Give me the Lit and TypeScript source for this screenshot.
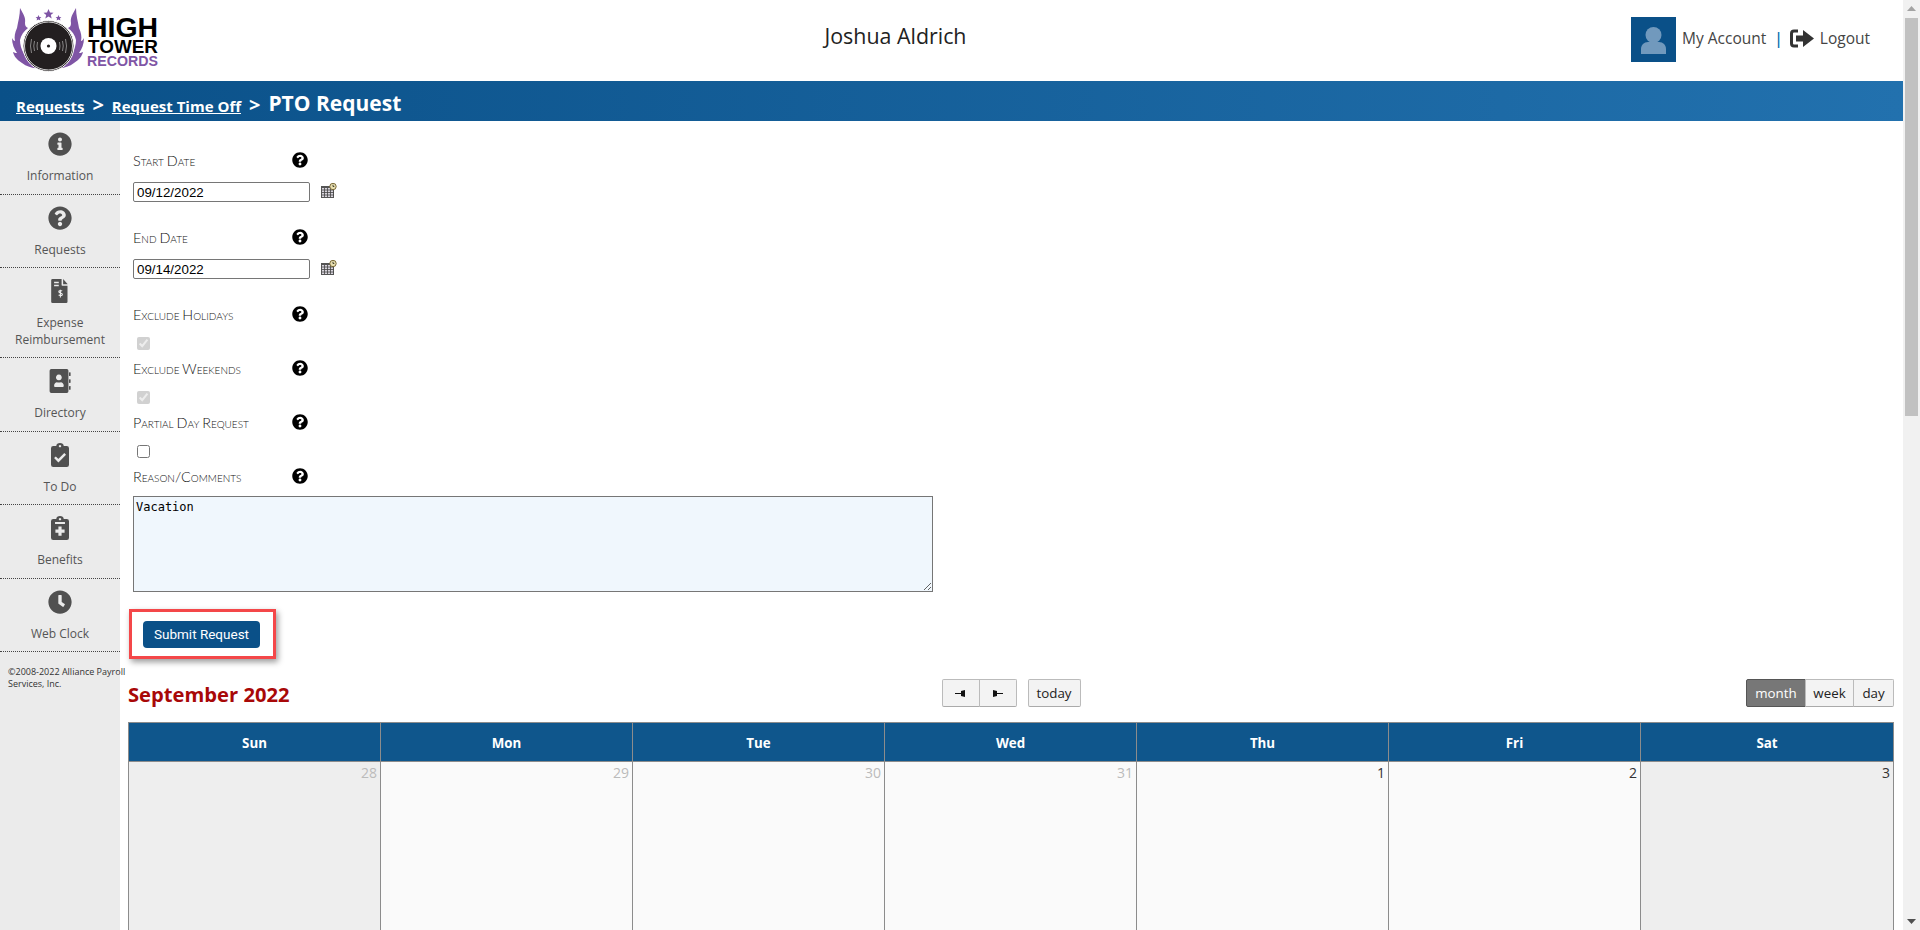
import { LitElement, html, css, svg } from "lit";
import { customElement } from "lit/decorators.js";

const INFO = "M256 8C119.043 8 8 119.083 8 256c0 136.997 111.043 248 248 248s248-111.003 248-248C504 119.083 392.957 8 256 8zm0 110c23.196 0 42 18.804 42 42s-18.804 42-42 42-42-18.804-42-42 18.804-42 42-42zm56 254c0 6.627-5.373 12-12 12h-88c-6.627 0-12-5.373-12-12v-24c0-6.627 5.373-12 12-12h12v-64h-12c-6.627 0-12-5.373-12-12v-24c0-6.627 5.373-12 12-12h64c6.627 0 12 5.373 12 12v100h12c6.627 0 12 5.373 12 12v24z";
const QUESTION = "M504 256c0 136.997-111.043 248-248 248S8 392.997 8 256C8 119.083 119.043 8 256 8s248 111.083 248 248zM262.655 90c-54.497 0-89.255 22.957-116.549 63.758-3.536 5.286-2.353 12.415 2.715 16.258l34.699 26.31c5.205 3.947 12.621 3.008 16.665-2.122 17.864-22.658 30.113-35.797 57.303-35.797 20.429 0 45.698 13.148 45.698 32.958 0 14.976-12.363 22.667-32.534 33.976C247.128 238.528 216 254.941 216 296v4c0 6.627 5.373 12 12 12h56c6.627 0 12-5.373 12-12v-1.333c0-28.462 83.186-29.647 83.186-106.667 0-58.002-60.165-102-116.531-102zM256 338c-25.365 0-46 20.635-46 46 0 25.364 20.635 46 46 46s46-20.636 46-46c0-25.365-20.635-46-46-46z";
const CLOCK = "M256 8C119 8 8 119 8 256s111 248 248 248 248-111 248-248S393 8 256 8zm57.1 350.1L224.9 294c-3.1-2.3-4.9-5.9-4.9-9.7V116c0-6.6 5.4-12 12-12h48c6.6 0 12 5.4 12 12v137.7l63.5 46.2c5.4 3.9 6.5 11.4 2.6 16.8l-28.2 38.8c-3.9 5.3-11.4 6.5-16.8 2.6z";

const icon = (d: string) => svg`<path d=${d} fill="currentColor"/>`;

const navIcons: Record<string, unknown> = {
  info: icon(INFO),
  question: icon(QUESTION),
  clock: icon(CLOCK),
  invoice: svg`<path fill="currentColor" fill-rule="evenodd" d="M96 0H290V130a14 14 0 0 0 14 14H416V484a28 28 0 0 1-28 28H96a28 28 0 0 1-28-28V28A28 28 0 0 1 96 0ZM130 60V92H230V60ZM130 124V156H230V124Z"/><path fill="currentColor" d="M322 0 416 104V112H322Z"/><path d="M300 258c-12-16-70-18-70 14 0 32 76 20 76 56 0 34-64 30-80 12M264 228V392" fill="none" stroke="#ebebeb" stroke-width="24"/>`,
  book: svg`<path fill="currentColor" fill-rule="evenodd" d="M70 0H400a36 36 0 0 1 36 36V476a36 36 0 0 1-36 36H70a36 36 0 0 1-36-36V36A36 36 0 0 1 70 0ZM232 118a62 62 0 1 0 .1 0ZM130 358c0-50 34-76 60-76 20 10 66 10 86 0 26 0 60 26 60 76 0 16-10 26-26 26H156c-16 0-26-10-26-26Z"/><rect fill="currentColor" x="448" y="70" width="34" height="80" rx="12"/><rect fill="currentColor" x="448" y="216" width="34" height="80" rx="12"/><rect fill="currentColor" x="448" y="362" width="34" height="80" rx="12"/>`,
  check: svg`<path fill="currentColor" fill-rule="evenodd" d="M112 64H176C176 28 212 0 256 0S336 28 336 64H400A48 48 0 0 1 448 112V464A48 48 0 0 1 400 512H112A48 48 0 0 1 64 464V112A48 48 0 0 1 112 64ZM256 40a26 26 0 1 0 .1 0Z"/><path d="M148 304 222 378 366 234" fill="none" stroke="#ebebeb" stroke-width="52"/>`,
  medical: svg`<path fill="currentColor" fill-rule="evenodd" d="M112 64H176C176 28 212 0 256 0S336 28 336 64H400A48 48 0 0 1 448 112V464A48 48 0 0 1 400 512H112A48 48 0 0 1 64 464V112A48 48 0 0 1 112 64ZM256 40a26 26 0 1 0 .1 0ZM150 128V168H362V128ZM222 226V290H158V358H222V422H290V358H354V290H290V226Z"/>`,
};

const nav = [
  { i: "info", t: ["Information"] },
  { i: "question", t: ["Requests"] },
  { i: "invoice", t: ["Expense", "Reimbursement"] },
  { i: "book", t: ["Directory"] },
  { i: "check", t: ["To Do"] },
  { i: "medical", t: ["Benefits"] },
  { i: "clock", t: ["Web Clock"] },
];

const days = [
  { n: 28, muted: true, weekend: true },
  { n: 29, muted: true },
  { n: 30, muted: true },
  { n: 31, muted: true },
  { n: 1 },
  { n: 2 },
  { n: 3, weekend: true },
];

@customElement("app-root")
export class AppRoot extends LitElement {
  static styles = css`
    :host { display: flex; height: 930px; overflow: hidden; font-family: "Open Sans", sans-serif; color: #333; background: #fff; }
    .page { flex: 1; min-width: 0; display: flex; flex-direction: column; }
    .header { height: 81px; flex: none; display: grid; grid-template-columns: 1fr auto 1fr; align-items: center; }
    .logo { display: block; margin-left: 11px; margin-top: -1px; }
    .logo text { font-family: "Liberation Sans", sans-serif; font-weight: 700; }
    .name { font-size: 21.4px; color: #222; margin-top: -11px; margin-left: -112px; }
    .account { justify-self: end; display: flex; align-items: center; margin-right: 33px; margin-top: -2px; font-size: 15.5px; color: #444; }
    .account span { margin-top: -3px; }
    .avatar { width: 45px; height: 45px; background: #0a5088; display: block; margin-right: 6px; }
    .account .sep { color: #0a6db0; margin-left: 8px; margin-right: 7px; font-weight: 600; }
    .logout { margin-right: 6px; display: block; margin-top: -2px; }
    .crumbs { height: 40px; flex: none; background: linear-gradient(90deg, #0a5088, #2271ae); color: #fff; display: flex; align-items: center; padding: 9px 16px 0; box-sizing: border-box; font-size: 15px; font-weight: 700; white-space: nowrap; }
    .crumbs a { color: #fff; text-decoration: underline; }
    .crumbs .gt { font-size: 20px; margin: -2px 8px 0; line-height: 1; }
    .crumbs .cur { font-size: 21px; margin-top: -5px; }
    .body { flex: 1; min-height: 0; display: flex; }
    .side { width: 120px; flex: none; background: #ebebeb; color: #555; }
    .item { padding: 11px 0 9px; border-bottom: 1px dotted #444; text-align: center; font-size: 12px; line-height: 16.5px; }
    .item svg { display: block; width: 24px; height: 24px; margin: 0 auto 12px; color: #505050; }
    .copy { padding: 14px 0 0 8px; font-size: 9px; line-height: 12px; color: #333; white-space: nowrap; }
    .main { flex: 1; min-width: 0; padding: 29px 9px 0 8px; }
    .form { padding-left: 5px; }
    .lab { display: flex; align-items: center; height: 20px; font-family: Lato, sans-serif; font-weight: 300; font-variant: small-caps; font-size: 14.4px; word-spacing: -1px; color: #111; }
    .lab span { width: 159px; white-space: nowrap; }
    .lab svg { width: 16px; height: 16px; display: block; color: #000; }
    .date { display: flex; align-items: center; margin-top: 12px; margin-bottom: 25px; }
    .date input { width: 177px; height: 20px; box-sizing: border-box; font: 13.33px "Liberation Sans", sans-serif; padding: 1px 3px; border: 1px solid #767676; border-radius: 2px; color: #000; margin: 0; }
    .date svg { margin-left: 11px; display: block; margin-top: -4px; }
    .cb { display: block; margin: 13px 0 8px 4px; width: 13px; height: 13px; }
    textarea { display: block; width: 800px; height: 96px; box-sizing: border-box; margin: 10px 0 0; border: 1px solid #767676; background: #f0f7fd; font: 12px "DejaVu Sans Mono", monospace; padding: 3px 2px 2px; color: #000; }
    .hl { margin: 17px 0 0 -4px; width: 147px; height: 50px; box-sizing: border-box; border: 3px solid #f44749; box-shadow: 2px 3px 6px rgba(0,0,0,.4); display: flex; align-items: center; padding: 0 0 0 11px; }
    .submit { width: 117px; height: 27px; background: #0a5088; color: #fff; border: 0; border-radius: 4px; font: 13.5px Roboto, sans-serif; padding: 0; margin: 0; }
    .toolbar { display: grid; grid-template-columns: 1fr auto 1fr; align-items: center; margin-top: 19px; height: 28px; }
    .title { font-size: 20.2px; font-weight: 700; color: #a80808; margin-top: 2px; white-space: nowrap; }
    .group { display: flex; }
    .navs { display: flex; gap: 11px; margin-left: 0; }
    .right { justify-self: end; }
    .btn { height: 28px; box-sizing: border-box; border: 1px solid #bbb; border-bottom-color: #aaa; background: #f3f3f3; font: 13.33px "Open Sans", sans-serif; color: #222; padding: 0; margin: 0 0 0 -1px; display: flex; align-items: center; justify-content: center; }
    .group .btn:first-child { margin-left: 0; border-radius: 2px 0 0 2px; }
    .group .btn:last-child { border-radius: 0 2px 2px 0; }
    .one { border-radius: 2px; }
    .w38 { width: 38px; }
    .w53 { width: 53px; margin: 0; }
    .w60 { width: 60px; }
    .w49 { width: 49px; }
    .w41 { width: 41px; }
    .on { background: #777; color: #fff; border-color: #555; }
    .cal { margin-top: 16px; display: grid; grid-template-columns: repeat(7, 1fr); border: solid #8c8c8c; border-width: 1px 1px 0 1px; box-sizing: border-box; height: 400px; grid-template-rows: 39px 1fr; }
    .th { background: #0f568c; color: #fff; font-size: 13.33px; font-weight: 700; display: flex; align-items: center; justify-content: center; padding-top: 1px; box-sizing: border-box; border-right: 1px solid #8c8c8c; border-bottom: 1px solid #8c8c8c; }
    .td { border-right: 1px solid #8c8c8c; text-align: right; padding: 1px 3px 0 0; font-size: 14px; line-height: 19px; color: #333; background: #fafafa; }
    .th:nth-child(7), .td:last-child { border-right: 0; }
    .td.muted { color: #bbb; }
    .td.weekend { background: #eee; }
    .scroll { width: 17px; flex: none; background: #f1f1f1; display: flex; flex-direction: column; align-items: center; }
    .arr { height: 17px; flex: none; display: flex; align-items: center; justify-content: center; }
    .thumb { width: 13px; height: 398px; flex: none; background: #c1c1c1; margin-top: 1px; }
    .gap { flex: 1; }
  `;

  render() {
    return html`
      <div class="page">
        <div class="header">
          <svg class="logo" width="150" height="68" viewBox="0 0 150 68" aria-label="High Tower Records">
            <path fill="#7f55a5" d="M9 2c3 6 6 9 5 15 0 3 1 4 3 5-4 3-7 7-8 12 0 9 5 18 14 24 2 2 5 3 8 4-8 1-15-1-20-5C5 53 3 50 2 46c2 1 3 1 4 1-3-4-5-9-5-15 1 2 2 3 3 3-1-4 0-9 2-13 1-6 3-13 3-20z"/>
            <path fill="#7f55a5" d="M65 2c-3 6-6 9-5 15 0 3-1 4-3 5 4 3 7 7 8 12 0 9-5 18-14 24-2 2-5 3-8 4 8 1 15-1 20-5 6-4 8-7 9-11-2 1-3 1-4 1 3-4 5-9 5-15-1 2-2 3-3 3 1-4 0-9-2-13-1-6-3-13-3-20z"/>
            <circle cx="37.500" cy="40" r="25.500" fill="#231f20" stroke="#fff" stroke-width="1"/>
            <circle cx="37.500" cy="40" r="24" fill="none" stroke="#fff" stroke-width=".8"/>
            <circle cx="37.500" cy="40" r="8" fill="#fff"/><circle cx="37.500" cy="40" r="1.600" fill="#231f20"/>
            <path d="M20.500 33q-2 7 0 14M23.500 35q-1.500 5 0 10M26.500 36q-1 4 0 8M54.500 33q2 7 0 14M51.500 35q1.500 5 0 10M48.500 36q1 4 0 8" fill="none" stroke="#ccc" stroke-width=".6"/>
            <path fill="#7f55a5" d="M37.500 3l1.500 3.500 3.500.3-2.700 2.300.9 3.500-3.200-2-3.200 2 .9-3.500-2.700-2.300 3.500-.3zM27.500 9l.9 2 2 .2-1.500 1.300.5 2-1.900-1.100-1.900 1.100.5-2-1.500-1.300 2-.2zM47.500 9l.9 2 2 .2-1.500 1.300.5 2-1.900-1.100-1.900 1.100.5-2-1.500-1.300 2-.2z"/>
            <text x="76" y="31" font-size="28" fill="#000" textLength="71" lengthAdjust="spacingAndGlyphs">HIGH</text>
            <text x="77" y="47" font-size="18" fill="#000" textLength="70" lengthAdjust="spacingAndGlyphs">TOWER</text>
            <text x="76" y="60" font-size="14" fill="#7f55a5" textLength="71" lengthAdjust="spacingAndGlyphs">RECORDS</text>
          </svg>
          <div class="name">Joshua Aldrich</div>
          <div class="account">
            <svg class="avatar" viewBox="0 0 45 45"><circle cx="22.500" cy="18" r="8" fill="#7199bd"/><path fill="#7199bd" d="M10 37v-5c0-4 3-7 7-7h11c4 0 7 3 7 7v5z"/></svg>
            <span>My Account</span><span class="sep">|</span>
            <svg class="logout" width="24" height="19" viewBox="0 0 24 19"><path d="M8 2H4Q1.500 2 1.500 4.500V14.500Q1.500 17 4 17H8" fill="none" stroke="#333" stroke-width="3"/><path fill="#333" d="M6 6.500H13V1L24 9.500 13 18V12.500H6z"/></svg>
            <span>Logout</span>
          </div>
        </div>
        <div class="crumbs"><a>Requests</a><span class="gt">&gt;</span><a>Request Time Off</a><span class="gt">&gt;</span><span class="cur">PTO Request</span></div>
        <div class="body">
          <div class="side">
            ${nav.map((n) => html`<div class="item"><svg viewBox="0 0 512 512">${navIcons[n.i]}</svg>${n.t.map((l) => html`<div>${l}</div>`)}</div>`)}
            <div class="copy">©2008-2022 Alliance Payroll<br />Services, Inc.</div>
          </div>
          <div class="main">
            <div class="form">
              ${this.label("Start Date")}
              ${this.date("09/12/2022")}
              ${this.label("End Date")}
              ${this.date("09/14/2022")}
              ${this.label("Exclude Holidays")}
              <input class="cb" type="checkbox" checked disabled />
              ${this.label("Exclude Weekends")}
              <input class="cb" type="checkbox" checked disabled />
              ${this.label("Partial Day Request")}
              <input class="cb" type="checkbox" />
              ${this.label("Reason/Comments")}
              <textarea .value=${"Vacation"}></textarea>
              <div class="hl"><button class="submit">Submit Request</button></div>
            </div>
            <div class="toolbar">
              <div class="title">September 2022</div>
              <div class="navs">
                <div class="group">
                  <button class="btn w38">${this.arrow(true)}</button>
                  <button class="btn w38">${this.arrow(false)}</button>
                </div>
                <button class="btn one w53">today</button>
              </div>
              <div class="group right">
                <button class="btn on w60">month</button>
                <button class="btn w49">week</button>
                <button class="btn w41">day</button>
              </div>
            </div>
            <div class="cal">
              ${["Sun", "Mon", "Tue", "Wed", "Thu", "Fri", "Sat"].map((d) => html`<div class="th">${d}</div>`)}
              ${days.map((d) => html`<div class="td ${d.muted ? "muted" : ""} ${d.weekend ? "weekend" : ""}">${d.n}</div>`)}
            </div>
          </div>
        </div>
      </div>
      <div class="scroll">
        <div class="arr"><svg width="9" height="5" viewBox="0 0 9 5"><path d="M4.500 0 9 5H0z" fill="#a3a3a3"/></svg></div>
        <div class="thumb"></div>
        <div class="gap"></div>
        <div class="arr"><svg width="9" height="5" viewBox="0 0 9 5"><path d="M0 0H9L4.500 5z" fill="#505050"/></svg></div>
      </div>
    `;
  }

  label(t: string) {
    return html`<div class="lab"><span>${t}</span><svg viewBox="0 0 512 512">${icon(QUESTION)}</svg></div>`;
  }

  arrow(left: boolean) {
    return html`<svg width="11" height="7" viewBox="0 0 11 7"><path d=${left ? "M0 3H6V1L10 0V7L6 6V4H0z" : "M11 3H5V1L1 0V7L5 6V4H11z"} fill="#111"/></svg>`;
  }

  date(v: string) {
    return html`<div class="date"><input type="text" .value=${v} />
      <svg width="16" height="15" viewBox="0 0 16 15">
        <rect x=".5" y="3.500" width="12" height="11" fill="#d8d4dc" stroke="#555"/>
        <path d="M1 7H13M1 9.500H13M1 12H13M3.500 4V14M6.500 4V14M9.500 4V14" stroke="#444" stroke-width=".8"/>
        <rect x=".5" y="3" width="12" height="2" fill="#555"/>
        <circle cx="12" cy="3.500" r="3.200" fill="#e8dfb0" stroke="#7a6a3a"/>
        <path d="M12 1.800V3.500H13.300" fill="none" stroke="#443"/>
      </svg></div>`;
  }
}
